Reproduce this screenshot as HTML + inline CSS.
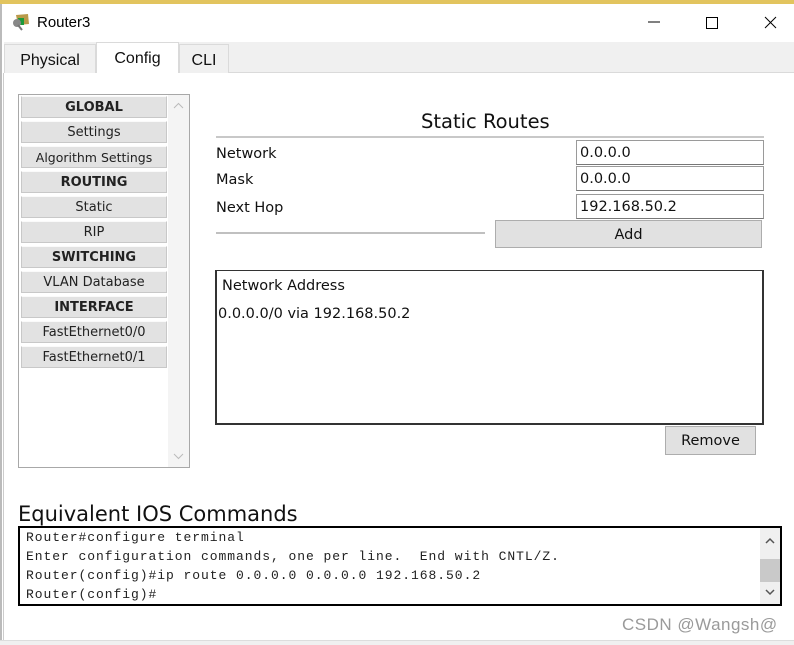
<!DOCTYPE html>
<html><head><meta charset="utf-8"><style>
*{margin:0;padding:0;box-sizing:border-box}
body{width:794px;height:645px;overflow:hidden;background:#fff;position:relative;font-family:"DejaVu Sans","Liberation Sans",sans-serif;color:#111}
.a{position:absolute}
.topstrip{left:0;top:0;width:794px;height:4px;background:#e2c45e}
.title{left:37px;top:14px;font-size:15px;font-family:"Liberation Sans",sans-serif;color:#000}
.tabbar{left:4px;top:42px;width:790px;height:31px;background:#f0f0f0;border-bottom:1px solid #dadada}
.tab{position:absolute;top:2px;height:29px;font-size:16px;font-family:"Liberation Sans",sans-serif;text-align:center;line-height:31px;border:1px solid #dadada;border-bottom:none;background:#f0f0f0}
.content{left:3px;top:73px;width:791px;height:567px;background:#fff;border-left:1px solid #ccc}
.bot{left:0;top:640px;width:794px;height:5px;background:#f0f0f0;border-top:1px solid #ddd}
.menu{left:18px;top:94px;width:172px;height:374px;border:1px solid #a8a8a8;background:#fff}
.it{position:absolute;left:2px;width:146px;height:22px;background:#e2e2e2;border:1px solid #c8c8c8;border-top-color:#fafafa;font-size:13px;text-align:center;line-height:22px;color:#222}
.it.b{font-weight:bold;font-size:13px}
.sb{position:absolute;left:149px;top:0;width:21px;height:372px;background:#f4f4f4}
.lbl{font-family:"DejaVu Sans",sans-serif;font-size:14.5px}
.inp{border:1px solid #9a9a9a;border-bottom-color:#777;background:#fff;font-size:14.5px;padding-left:3px;line-height:25px;height:25px}
.btn{background:#e1e1e1;border:1px solid #adadad;text-align:center;font-size:14.5px}
.mono{font-family:"Liberation Mono",monospace;font-size:13px;letter-spacing:0.95px;color:#222}
</style></head><body>
<div class="a topstrip"></div>
<div class="a" style="left:0;top:4px;width:2px;height:641px;background:#bbb"></div>
<svg class="a" style="left:10px;top:12px" width="22" height="20"><path d="M6 3 L18 2 L19 12 L8 13Z" fill="#b99a4a"/><rect x="8" y="6" width="6" height="7" fill="#1a9a3a"/><circle cx="7" cy="11" r="4" fill="#888"/><line x1="8" y1="13" x2="12" y2="18" stroke="#777" stroke-width="2"/></svg>
<div class="a title">Router3</div>
<svg class="a" style="left:640px;top:12px" width="150" height="22"><line x1="8" y1="10" x2="20" y2="10" stroke="#000"/><rect x="66.5" y="5.5" width="11" height="11" fill="none" stroke="#000"/><path d="M125 5 L136 16 M136 5 L125 16" stroke="#000"/></svg>
<div class="a tabbar">
 <div class="tab" style="left:0;width:92px">Physical</div>
 <div class="tab" style="left:92px;top:0;height:32px;width:83px;background:#fff">Config</div>
 <div class="tab" style="left:175px;width:50px">CLI</div>
</div>
<div class="a content"></div>
<div class="a menu">
 <div class="it b" style="top:1px">GLOBAL</div>
 <div class="it" style="top:26px">Settings</div>
 <div class="it" style="top:51px;font-size:12.5px">Algorithm Settings</div>
 <div class="it b" style="top:76px">ROUTING</div>
 <div class="it" style="top:101px">Static</div>
 <div class="it" style="top:126px">RIP</div>
 <div class="it b" style="top:151px">SWITCHING</div>
 <div class="it" style="top:176px">VLAN Database</div>
 <div class="it b" style="top:201px">INTERFACE</div>
 <div class="it" style="top:226px">FastEthernet0/0</div>
 <div class="it" style="top:251px">FastEthernet0/1</div>
 <div class="sb"><svg width="21" height="372"><path d="M6 13 L10.5 8.5 L15 13" fill="none" stroke="#bbb"/><path d="M6 359 L10.5 363.5 L15 359" fill="none" stroke="#bbb"/></svg></div>
</div>
<div class="a" style="left:421px;top:110px;font-size:19.5px">Static Routes</div>
<div class="a" style="left:216px;top:136px;width:548px;height:2px;background:#c8c8c8"></div>
<div class="a lbl" style="left:216px;top:146px">Network</div>
<div class="a lbl" style="left:216px;top:172px">Mask</div>
<div class="a lbl" style="left:216px;top:200px">Next Hop</div>
<div class="a inp" style="left:576px;top:140px;width:188px">0.0.0.0</div>
<div class="a inp" style="left:576px;top:166px;width:188px">0.0.0.0</div>
<div class="a inp" style="left:576px;top:194px;width:188px">192.168.50.2</div>
<div class="a" style="left:216px;top:232px;width:269px;height:2px;background:#c0c0c0"></div>
<div class="a btn" style="left:495px;top:220px;width:267px;height:28px;line-height:28px">Add</div>
<div class="a" style="left:215px;top:270px;width:549px;height:155px;border:2px solid #333;border-top-width:1px"></div>
<div class="a lbl" style="left:222px;top:278px">Network Address</div>
<div class="a lbl" style="left:218px;top:306px">0.0.0.0/0 via 192.168.50.2</div>
<div class="a btn" style="left:665px;top:426px;width:91px;height:29px;line-height:29px">Remove</div>
<div class="a" style="left:18px;top:502px;font-size:21px;font-family:'DejaVu Sans',sans-serif;color:#111">Equivalent IOS Commands</div>
<div class="a" style="left:18px;top:526px;width:764px;height:80px;border:2px solid #000;background:#fff"></div>
<div class="a mono" style="left:26px;top:528px;line-height:19px;white-space:pre">Router#configure terminal
Enter configuration commands, one per line.  End with CNTL/Z.
Router(config)#ip route 0.0.0.0 0.0.0.0 192.168.50.2
Router(config)#</div>
<div class="a" style="left:760px;top:528px;width:20px;height:76px;background:#f0f0f0"><div style="position:absolute;top:31px;left:0;width:20px;height:23px;background:#c9c9c9"></div><svg width="20" height="76" style="position:absolute;left:0;top:0"><path d="M6 15 L10 11 L14 15" fill="none" stroke="#555" stroke-width="1.5"/><path d="M6 62 L10 66 L14 62" fill="none" stroke="#555" stroke-width="1.5"/></svg></div>
<div class="a" style="left:622px;top:615px;font-size:17px;letter-spacing:0.5px;color:#9a9a9a;font-family:'Liberation Sans',sans-serif">CSDN @Wangsh@</div>
<div class="a bot"></div>
</body></html>
